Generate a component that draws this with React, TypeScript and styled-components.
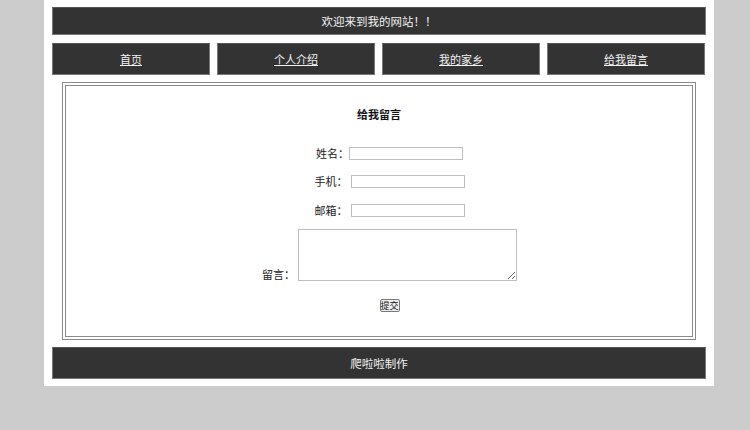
import React from "react";
import styled, { createGlobalStyle } from "styled-components";

const Global = createGlobalStyle`
  html, body { margin: 0; padding: 0; background: #cccccc; }
  body { font-family: "Noto Sans CJK SC", "Noto Sans", sans-serif; font-size: 11px; color: #222; }
`;

const Page = styled.div`
  width: 654px;
  margin-left: 44px;
  padding: 7px 8px 7px 8px;
  background: #ffffff;
  display: flex;
  flex-direction: column;
  gap: 7px;
`;

const Bar = styled.div<{ $h: number }>`
  height: ${(p) => p.$h}px;
  box-sizing: border-box;
  background: #333333;
  border: 1px solid #777;
  border-top-color: #555;
  color: #f2f2f2;
  font-size: 11.5px;
  display: flex;
  align-items: center;
  justify-content: center;
`;

const Nav = styled.nav`
  display: grid;
  grid-template-columns: repeat(4, 158px);
  gap: 7px;
  margin-top: 1px;
`;

const NavItem = styled.a`
  height: 32px;
  box-sizing: border-box;
  background: #333333;
  border: 1px solid #777;
  border-top-color: #555;
  color: #f2f2f2;
  text-decoration: underline;
  font-size: 11px;
  display: flex;
  align-items: center;
  justify-content: center;
  cursor: pointer;
`;

const Content = styled.section`
  margin: 0 10px;
  height: 258px;
  box-sizing: border-box;
  border: 4px double #8a8a8a;
  display: flex;
  flex-direction: column;
  align-items: center;
  padding-top: 21px;
`;

const Title = styled.h2`
  margin: 0 0 25px 0;
  font-size: 11px;
  font-weight: bold;
  color: #111;
  line-height: 14px;
`;

const Form = styled.form`
  display: flex;
  flex-direction: column;
  align-items: center;
  padding-left: 21px;
`;

const Row = styled.div<{ $gap: number; $mb: number }>`
  display: flex;
  align-items: flex-end;
  gap: ${(p) => p.$gap}px;
  margin-bottom: ${(p) => p.$mb}px;
`;

const Label = styled.label`
  font-size: 11px;
  color: #222;
  line-height: 14px;
`;

const Input = styled.input`
  width: 114px;
  height: 13px;
  box-sizing: border-box;
  border: 1px solid #bdbdbd;
  padding: 0;
  margin: 0;
  background: #fff;
`;

const Area = styled.textarea`
  width: 219px;
  height: 52px;
  box-sizing: border-box;
  border: 1px solid #bdbdbd;
  padding: 0;
  margin: 0;
  resize: both;
`;

const Submit = styled.button`
  width: 20px;
  height: 13px;
  box-sizing: border-box;
  padding: 0;
  border: 1px solid #777;
  border-radius: 2px;
  background: #efefef;
  font-family: inherit;
  font-size: 9px;
  line-height: 10px;
  color: #111;
  margin-top: 18px;
`;

export default function App() {
  return (
    <>
      <Global />
      <Page>
        <Bar $h={28}>欢迎来到我的网站！！</Bar>
        <Nav>
          <NavItem>首页</NavItem>
          <NavItem>个人介绍</NavItem>
          <NavItem>我的家乡</NavItem>
          <NavItem>给我留言</NavItem>
        </Nav>
        <Content>
          <Title>给我留言</Title>
          <Form>
            <Row $gap={-2} $mb={14}>
              <Label>姓名：</Label>
              <Input />
            </Row>
            <Row $gap={3} $mb={15}>
              <Label>手机：</Label>
              <Input />
            </Row>
            <Row $gap={3} $mb={12}>
              <Label>邮箱：</Label>
              <Input />
            </Row>
            <Row $gap={3} $mb={0}>
              <Label>留言：</Label>
              <Area />
            </Row>
            <Submit type="button">提交</Submit>
          </Form>
        </Content>
        <Bar $h={32}>爬啦啦制作</Bar>
      </Page>
    </>
  );
}
